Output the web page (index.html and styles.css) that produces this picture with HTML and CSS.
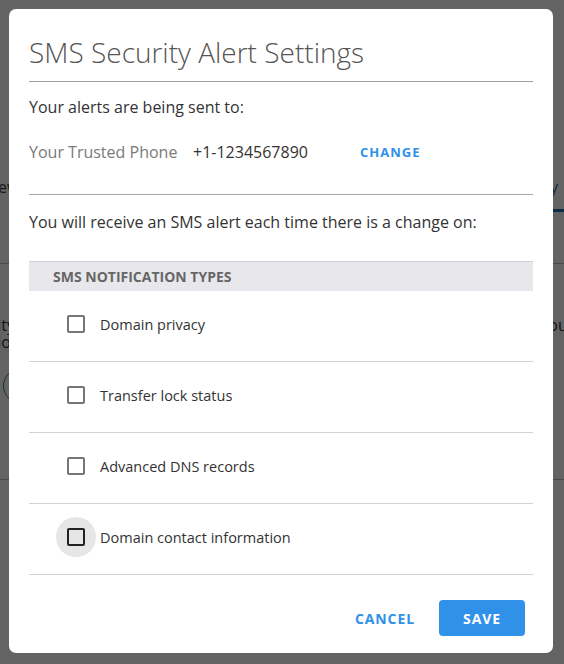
FILE: index.html
```html
<!DOCTYPE html>
<html lang="en">

<head>
    <meta charset="UTF-8">
    <meta name="viewport" content="width=device-width, initial-scale=1.0">
    <title>SMS Security Alert Settings</title>
    <link rel="stylesheet" href="styles.css">
</head>

<body>
    <!-- page behind the dialog -->
    <div class="page">
        <div class="tabs">
            <span class="tab">Overview</span>
            <span class="tab active">Security</span>
        </div>
        <div class="section">
            <p>Enhance the security of your domain account and get notified when something changes on your domain configuration.</p>
            <div class="round-btn"></div>
        </div>
        <div class="section last"></div>
    </div>

    <div class="overlay">
        <div class="dialog">
            <h2>SMS Security Alert Settings</h2>
            <p class="intro">Your alerts are being sent to:</p>
            <div class="phone">
                <span class="phone-label">Your Trusted Phone</span>
                <span class="phone-number">+1-1234567890</span>
                <a class="link" href="#">CHANGE</a>
            </div>
            <p class="intro second">You will receive an SMS alert each time there is a change on:</p>

            <div class="types">
                <div class="types-head">SMS NOTIFICATION TYPES</div>
                <label class="row">
                    <span class="check"><span class="box"></span></span>
                    <span class="row-text">Domain privacy</span>
                </label>
                <label class="row">
                    <span class="check"><span class="box"></span></span>
                    <span class="row-text">Transfer lock status</span>
                </label>
                <label class="row">
                    <span class="check"><span class="box"></span></span>
                    <span class="row-text">Advanced DNS records</span>
                </label>
                <label class="row">
                    <span class="check focus"><span class="box"></span></span>
                    <span class="row-text">Domain contact information</span>
                </label>
            </div>

            <div class="actions">
                <button class="btn flat">CANCEL</button>
                <button class="btn primary">SAVE</button>
            </div>
        </div>
    </div>
</body>

</html>
```

FILE: styles.css
```css
body {
    margin: 0;
    padding: 0;
    background-color: #fff;
    font-family: "Open Sans", "Noto Sans", sans-serif;
    color: #333;
}

/* background page */
.page {
    width: 564px;
    height: 664px;
    overflow: hidden;
}

.tabs {
    display: flex;
    justify-content: space-between;
    margin-left: -50px;
    padding-top: 176px;
    height: 36px;
    box-sizing: content-box;
    font-size: 16px;
}

.tab {
    color: #444;
}

.tab.active {
    color: #1f6fb3;
    border-bottom: 3px solid #1f6fb3;
    padding: 0 6px 0 30px;
    height: 33px;
}

.section {
    border-top: 1px solid #bbb;
    margin-top: 51px;
    padding-top: 53px;
    height: 216px;
    box-sizing: border-box;
}

.section p {
    margin: 0 -30px 0 -140px;
    font-size: 16px;
    line-height: 17px;
    color: #333;
}

.round-btn {
    width: 34px;
    height: 34px;
    margin: 17px 0 0 3px;
    border: 1px solid #3c8a4c;
    border-radius: 50%;
}

.section.last {
    margin-top: 0;
}

/* dialog */
.overlay {
    position: fixed;
    top: 0;
    left: 0;
    right: 0;
    bottom: 0;
    background-color: rgba(0, 0, 0, 0.61);
    padding: 9px 11px 11px 9px;
}

.dialog {
    width: 544px;
    height: 644px;
    box-sizing: border-box;
    background-color: #fff;
    border-radius: 7px;
    padding: 24px 20px 0 20px;
}

.dialog h2 {
    margin: 0;
    font-size: 28px;
    font-weight: 300;
    line-height: 38px;
    color: #555;
    padding-bottom: 10px;
    border-bottom: 1px solid #9e9e9e;
}

.intro {
    margin: 14px 0 0;
    font-size: 16px;
    line-height: 22px;
}

.intro.second {
    margin-top: 16px;
}

.phone {
    display: flex;
    align-items: flex-start;
    height: 77px;
    padding-top: 23px;
    border-bottom: 1px solid #a6a6a6;
    font-size: 16px;
    line-height: 22px;
    box-sizing: border-box;
}

.phone-label {
    color: #7a7a7a;
    width: 164px;
}

.phone-number {
    width: 167px;
}

.link {
    color: #2f91e8;
    font-weight: 700;
    font-size: 13px;
    letter-spacing: 1px;
    text-decoration: none;
}

.types {
    margin-top: 28px;
}

.types-head {
    height: 30px;
    line-height: 30px;
    background-color: #e8e8ec;
    border-top: 1px solid #cfcfd4;
    box-sizing: border-box;
    padding-left: 24px;
    font-size: 14px;
    font-weight: 700;
    color: #666;
}

.row {
    display: flex;
    align-items: center;
    height: 71px;
    border-bottom: 1px solid #d2d2d2;
    box-sizing: border-box;
    padding-left: 27px;
    padding-bottom: 4px;
    font-size: 14.5px;
    color: #333;
}

.check {
    width: 40px;
    height: 40px;
    border-radius: 50%;
    display: flex;
    align-items: center;
    justify-content: center;
    margin-right: 4px;
}

.check.focus {
    background-color: #e6e6e6;
}

.box {
    width: 18px;
    height: 18px;
    box-sizing: border-box;
    border: 2px solid #757575;
    border-radius: 2px;
}

.check.focus .box {
    border-color: #222;
}

.actions {
    display: flex;
    justify-content: flex-end;
    gap: 8px;
    padding-top: 25px;
    padding-right: 8px;
}

.btn {
    height: 36px;
    border: none;
    border-radius: 4px;
    font-family: "Open Sans", "Noto Sans", sans-serif;
    font-size: 14px;
    font-weight: 700;
    letter-spacing: 0.9px;
    padding: 0 16px;
    cursor: pointer;
}

.btn.flat {
    background: none;
    color: #2f91e8;
}

.btn.primary {
    width: 86px;
    background-color: #2f91e8;
    color: #fff;
}
```
